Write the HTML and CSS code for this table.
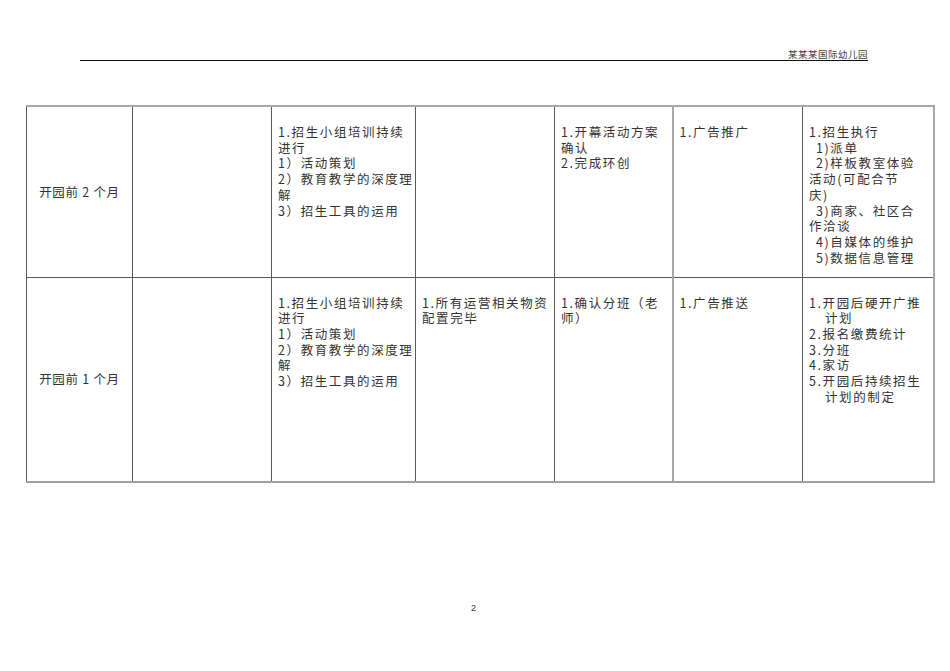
FILE: index.html
```html
<!DOCTYPE html>
<html lang="zh">
<head>
<meta charset="utf-8">
<title>某某某国际幼儿园</title>
<link rel="stylesheet" href="styles.css">
</head>
<body>
<div class="page">
  <header class="header"><span class="org">某某某国际幼儿园</span></header>
  <table class="plan">
    <colgroup>
      <col class="c1"><col class="c2"><col class="c3"><col class="c4"><col class="c5"><col class="c6"><col class="c7">
    </colgroup>
    <tr class="r1">
      <td class="period">开园前 2 个月</td>
      <td></td>
      <td><div>1.招生小组培训持续</div><div>进行</div><div>1）活动策划</div><div>2）教育教学的深度理</div><div>解</div><div>3）招生工具的运用</div></td>
      <td></td>
      <td><div>1.开幕活动方案</div><div>确认</div><div>2.完成环创</div></td>
      <td class="light-l"><div>1.广告推广</div></td>
      <td><div>1.招生执行</div><div class="ind">1)派单</div><div class="ind">2)样板教室体验</div><div>活动(可配合节</div><div>庆)</div><div class="ind">3)商家、社区合</div><div>作洽谈</div><div class="ind">4)自媒体的维护</div><div class="ind">5)数据信息管理</div></td>
    </tr>
    <tr class="r2">
      <td class="period">开园前 1 个月</td>
      <td></td>
      <td><div>1.招生小组培训持续</div><div>进行</div><div>1）活动策划</div><div>2）教育教学的深度理</div><div>解</div><div>3）招生工具的运用</div></td>
      <td><div>1.所有运营相关物资</div><div>配置完毕</div></td>
      <td><div>1.确认分班（老</div><div>师）</div></td>
      <td class="light-l"><div>1.广告推送</div></td>
      <td><div>1.开园后硬开广推</div><div class="hang">计划</div><div>2.报名缴费统计</div><div>3.分班</div><div>4.家访</div><div>5.开园后持续招生</div><div class="hang">计划的制定</div></td>
    </tr>
  </table>
  <footer class="pageno">2</footer>
</div>
</body>
</html>
```
FILE: styles.css
```css
html, body {
  margin: 0;
  padding: 0;
  background: #ffffff;
}
body {
  width: 950px;
  height: 671px;
  overflow: hidden;
  font-family: "Noto Sans CJK SC", "Liberation Serif", sans-serif;
  color: #333;
}
.page {
  position: relative;
  width: 950px;
  height: 671px;
}
.header {
  margin-left: 80px;
  width: 788px;
  padding-top: 47px;
  height: 13px;
  border-bottom: 1.5px solid #111;
  display: flex;
  justify-content: flex-end;
  align-items: flex-end;
}
.org {
  font-size: 9.5px;
  line-height: 12px;
  letter-spacing: 0.5px;
  color: #444;
}
.plan {
  margin-left: 26px;
  margin-top: 44px;
  border-collapse: collapse;
  table-layout: fixed;
  width: 907px;
  font-size: 12.5px;
  line-height: 15.7px;
  letter-spacing: 1.6px;
}
.c1 { width: 106px; }
.c2 { width: 139px; }
.c3 { width: 144px; }
.c4 { width: 139px; }
.c5 { width: 118px; }
.c6 { width: 130px; }
.c7 { width: 131px; }
.plan td {
  border: 1px solid #5a5a5a;
  vertical-align: top;
  padding: 17px 4px 0 6px;
  white-space: nowrap;
}
.plan tr:first-child td {
  border-top: 2px solid #a8a8a8;
}
.plan tr:last-child td {
  border-bottom: 2px solid #a0a0a0;
}
.plan td:last-child {
  border-right: 2px solid #a8a8a8;
}
.plan td.light-l {
  border-left: 2px solid #a8a8a8;
}
.r1 { height: 171px; }
.r2 { height: 205px; }
.plan td.period {
  vertical-align: middle;
  text-align: center;
  padding: 0;
  letter-spacing: 0.7px;
}
.ind { padding-left: 7px; }
.hang { padding-left: 16px; }
.pageno {
  position: absolute;
  left: 471px;
  top: 603px;
  font-family: "Liberation Sans", sans-serif;
  font-size: 9px;
  color: #333;
}
```
